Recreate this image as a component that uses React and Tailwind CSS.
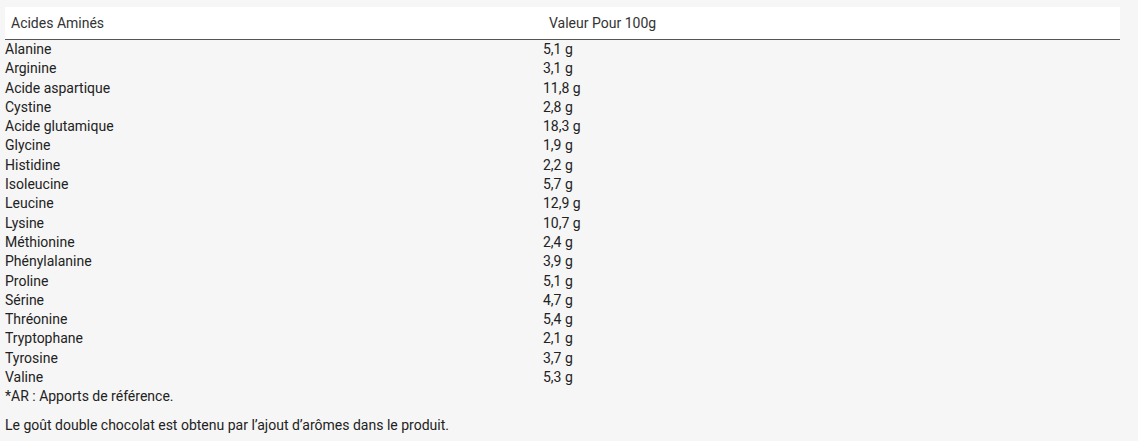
const ROWS = [
  ["Alanine", "5,1 g"],
  ["Arginine", "3,1 g"],
  ["Acide aspartique", "11,8 g"],
  ["Cystine", "2,8 g"],
  ["Acide glutamique", "18,3 g"],
  ["Glycine", "1,9 g"],
  ["Histidine", "2,2 g"],
  ["Isoleucine", "5,7 g"],
  ["Leucine", "12,9 g"],
  ["Lysine", "10,7 g"],
  ["Méthionine", "2,4 g"],
  ["Phénylalanine", "3,9 g"],
  ["Proline", "5,1 g"],
  ["Sérine", "4,7 g"],
  ["Thréonine", "5,4 g"],
  ["Tryptophane", "2,1 g"],
  ["Tyrosine", "3,7 g"],
  ["Valine", "5,3 g"],
];

export default function App() {
  return (
    <div
      className="min-h-[441px] bg-[#f6f6f6] text-[14px] text-[#222] pt-[7px] pl-[5px] pr-[18px]"
      style={{ fontFamily: "Roboto, 'Liberation Sans', sans-serif" }}
    >
      {/* Header */}
      <div className="grid grid-cols-[538px_1fr] bg-white border-b border-[#555] h-[33px] items-center">
        <div className="pl-[6px] text-[#333]">Acides Aminés</div>
        <div className="pl-[6px] text-[#333]">Valeur Pour 100g</div>
      </div>

      {/* Body */}
      <div>
        {ROWS.map(([name, value]) => (
          <div key={name} className="grid grid-cols-[538px_1fr] h-[19.3px] leading-[19px]">
            <div>{name}</div>
            <div>{value}</div>
          </div>
        ))}
      </div>

      <p className="leading-[19px]">*AR : Apports de référence.</p>
      <p className="mt-[10px] leading-[19px]">
        Le goût double chocolat est obtenu par l’ajout d’arômes dans le produit.
      </p>
    </div>
  );
}
